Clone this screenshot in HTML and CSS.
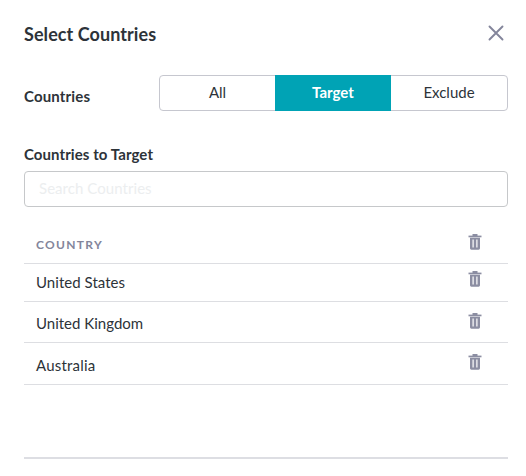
FILE: index.html
```html
<!DOCTYPE html>
<html lang="en">
<head>
<meta charset="utf-8">
<title>Select Countries</title>
<link rel="stylesheet" href="styles.css">
</head>
<body>
<svg class="defs" aria-hidden="true"><symbol id="trash" viewBox="0 0 14 16"><path d="M4.500 0h5v2h-5z"/><path d="M.5 1.600h13V3.300H.5z"/><path fill-rule="evenodd" d="M2 3.800h10V14.300q0 1.400-1.400 1.400H3.400Q2 15.700 2 14.300zM4.500 5.500v8h1.200v-8zM8.300 5.500v8h1.200v-8z"/></symbol></svg>
<main class="dialog">
<header class="header"><h1>Select Countries</h1><button class="close" aria-label="Close"><svg viewBox="0 0 16 16"><path d="M1.500 1.500l13 13M14.500 1.500l-13 13"/></svg></button></header>
<div class="mode"><span class="label">Countries</span><div class="segments"><button>All</button><button class="active">Target</button><button>Exclude</button></div></div>
<label class="label search-label" for="search">Countries to Target</label>
<input id="search" class="search" placeholder="Search Countries">
<div class="table">
<div class="row head"><span>COUNTRY</span><svg class="trash"><use href="#trash"/></svg></div>
<div class="row first"><span>United States</span><svg class="trash"><use href="#trash"/></svg></div>
<div class="row"><span>United Kingdom</span><svg class="trash"><use href="#trash"/></svg></div>
<div class="row last"><span>Australia</span><svg class="trash"><use href="#trash"/></svg></div>
</div>
<hr class="rule">
</main>
</body>
</html>
```
FILE: styles.css
```css
* { box-sizing: border-box; }
body { margin: 0; background: #fff; color: #2d3339; font: 15px/20px Lato, sans-serif; overflow: hidden; }
button { font: inherit; color: inherit; border: 0; background: none; padding: 0; }
.defs { position: absolute; width: 0; height: 0; }
.dialog { height: 476px; padding: 22px 18px 0 24px; }
.header { display: flex; justify-content: space-between; height: 53px; }
h1 { margin: 0; font-size: 18px; line-height: 24px; font-weight: 700; letter-spacing: 0.07px; }
.close { width: 16px; height: 16px; margin: 3px 4px 0 0; }
.close svg { display: block; width: 16px; height: 16px; fill: none; stroke: #83859b; stroke-width: 1.9; stroke-linecap: round; }
.mode { display: flex; justify-content: space-between; height: 36px; }
.label { font-weight: 700; letter-spacing: 0.08px; }
.mode .label { padding-top: 11px; letter-spacing: 0.15px; }
.segments { display: grid; grid-template-columns: 115px 116px 116px; width: 349px; border: 1px solid #c6c7cf; border-radius: 4px; }
.segments button { padding-bottom: 2px; }
.segments .active { background: #00a3b5; color: #fff; font-weight: 700; margin: -1px 0; }
.search-label { display: block; margin-top: 33px; height: 27px; }
.search { display: block; width: 100%; height: 36px; padding: 0 14px 2px; border: 1px solid #c6c8ca; border-radius: 4px; font: inherit; letter-spacing: 0.05px; background: #fff; }
.search::placeholder { color: #eceeef; opacity: 1; }
.table { padding-top: 19px; }
.row { display: flex; justify-content: space-between; height: 41px; padding: 11px 26px 0 12px; border-bottom: 1px solid #dddee2; }
.head { height: 38px; padding-top: 9px; color: #83859b; font-size: 12px; font-weight: 700; letter-spacing: 1.3px; }
.first { height: 38px; padding-top: 8px; }
.first span { letter-spacing: 0.04px; }
.last { height: 42px; padding-top: 12px; }
.last span { letter-spacing: 0.2px; }
.trash { width: 14px; height: 16px; fill: #8c8ea2; }
.head .trash, .first .trash, .last .trash { margin-top: -1px; }
.rule { margin: 72px 0 0; border: 0; height: 2px; background: #dddee3; }
```
